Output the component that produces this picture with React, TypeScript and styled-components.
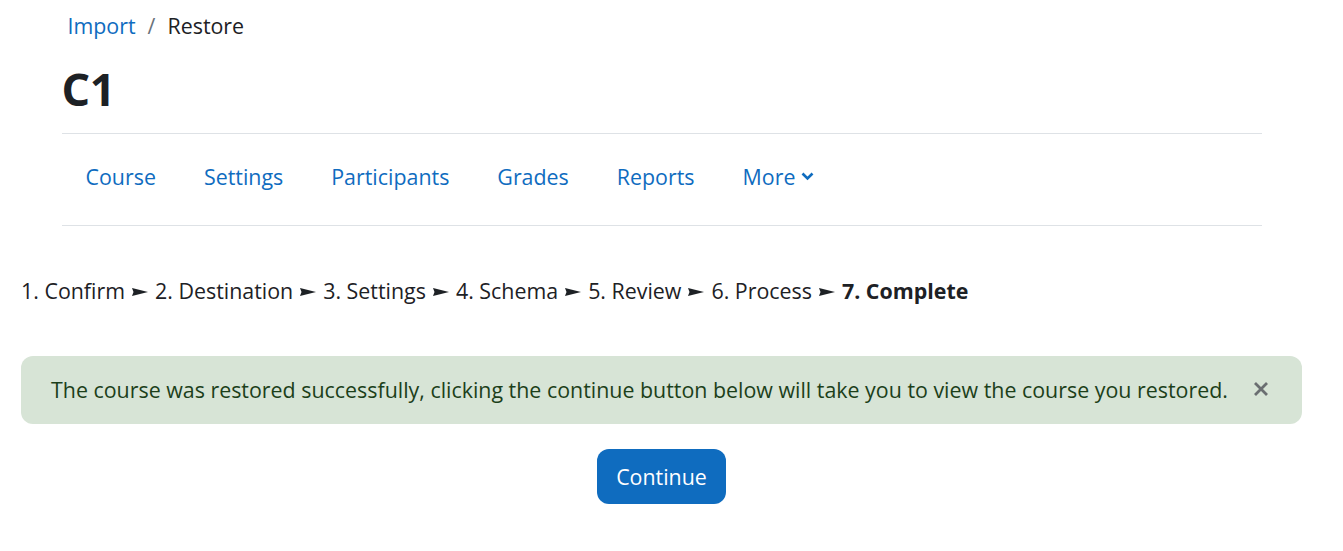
import React from 'react';
import styled, { createGlobalStyle } from 'styled-components';

const GlobalStyle = createGlobalStyle`
  html, body {
    margin: 0;
    padding: 0;
    background: #fff;
  }
  body {
    font-family: "Open Sans", "Noto Sans", sans-serif;
    font-size: 21.4px;
    line-height: 33.75px;
    color: #1d2125;
  }
`;

const Page = styled.div`
  width: 1281px;
  padding-left: 21px;
`;

const Header = styled.header`
  width: 1200px;
  margin: 0 auto;
`;

const Crumbs = styled.nav`
  display: flex;
  align-items: center;
  gap: 12px;
  padding: 8px 0 0 6px;
  height: 36px;
`;

const CrumbLink = styled.a`
  color: #0f6cbf;
  text-decoration: none;
`;

const CrumbSep = styled.span`
  color: #6a737b;
`;

const Title = styled.h1`
  margin: 12px 0 0;
  font-size: 45px;
  font-weight: 700;
  line-height: 66px;
  letter-spacing: -0.5px;
`;

const SecondaryNav = styled.ul`
  list-style: none;
  margin: 11px 0 0;
  padding: 14px 0 19px;
  display: flex;
  border-top: 1px solid #dee2e6;
  border-bottom: 1px solid #dee2e6;
`;

const NavItem = styled.li`
  padding: 12px 24px;
  color: #0f6cbf;
  display: flex;
  align-items: center;
  gap: 6px;
`;

const Steps = styled.div`
  margin-top: 48px;
  display: flex;
  gap: 7px;
  align-items: center;
`;

const Step = styled.span<{ $current?: boolean }>`
  font-weight: ${p => (p.$current ? 700 : 400)};
`;

const Arrow = styled.svg`
  display: block;
  margin-top: 2px;
`;

const Alert = styled.div`
  margin-top: 48px;
  background: #d7e4d6;
  color: #1c3f1a;
  border-radius: 12px;
  padding: 17px 30px 18px;
  display: flex;
  align-items: center;
  justify-content: space-between;
`;

const Close = styled.button`
  border: none;
  background: none;
  padding: 0;
  margin-right: 3px;
  display: flex;
  cursor: pointer;
`;

const Actions = styled.div`
  display: flex;
  justify-content: center;
  margin-top: 25px;
`;

const Button = styled.button`
  background: #0f6cbf;
  color: #fff;
  border: none;
  border-radius: 12px;
  font: inherit;
  padding: 0 19px;
  height: 55px;
`;

const steps = ['1. Confirm', '2. Destination', '3. Settings', '4. Schema', '5. Review', '6. Process'];
const navItems = ['Course', 'Settings', 'Participants', 'Grades', 'Reports'];

export default function App() {
  return (
    <>
      <GlobalStyle />
      <Page>
        <Header>
          <Crumbs>
            <CrumbLink href="#">Import</CrumbLink>
            <CrumbSep>/</CrumbSep>
            <span>Restore</span>
          </Crumbs>
          <Title>C1</Title>
          <SecondaryNav>
            {navItems.map(n => (
              <NavItem key={n}>{n}</NavItem>
            ))}
            <NavItem>
              More
              <svg width="13" height="9" viewBox="0 0 13 9">
                <path d="M1.5 1.5 L6.5 6.5 L11.5 1.5" fill="none" stroke="#0f6cbf" strokeWidth="2.6" />
              </svg>
            </NavItem>
          </SecondaryNav>
        </Header>
        <Steps>
          {steps.map(s => (
            <React.Fragment key={s}>
              <Step>{s}</Step>
              <Arrow width="16" height="8" viewBox="0 0 16 8">
                <polygon points="0,0 16,4 0,8 1.5,4" fill="#1d2125" />
              </Arrow>
            </React.Fragment>
          ))}
          <Step $current>7. Complete</Step>
        </Steps>
        <Alert>
          <span>The course was restored successfully, clicking the continue button below will take you to view the course you restored.</span>
          <Close aria-label="close">
            <svg width="16" height="16" viewBox="0 0 16 16">
              <path d="M2 2 L14 14 M14 2 L2 14" stroke="#6a6e71" strokeWidth="2.8" />
            </svg>
          </Close>
        </Alert>
        <Actions>
          <Button>Continue</Button>
        </Actions>
      </Page>
    </>
  );
}
